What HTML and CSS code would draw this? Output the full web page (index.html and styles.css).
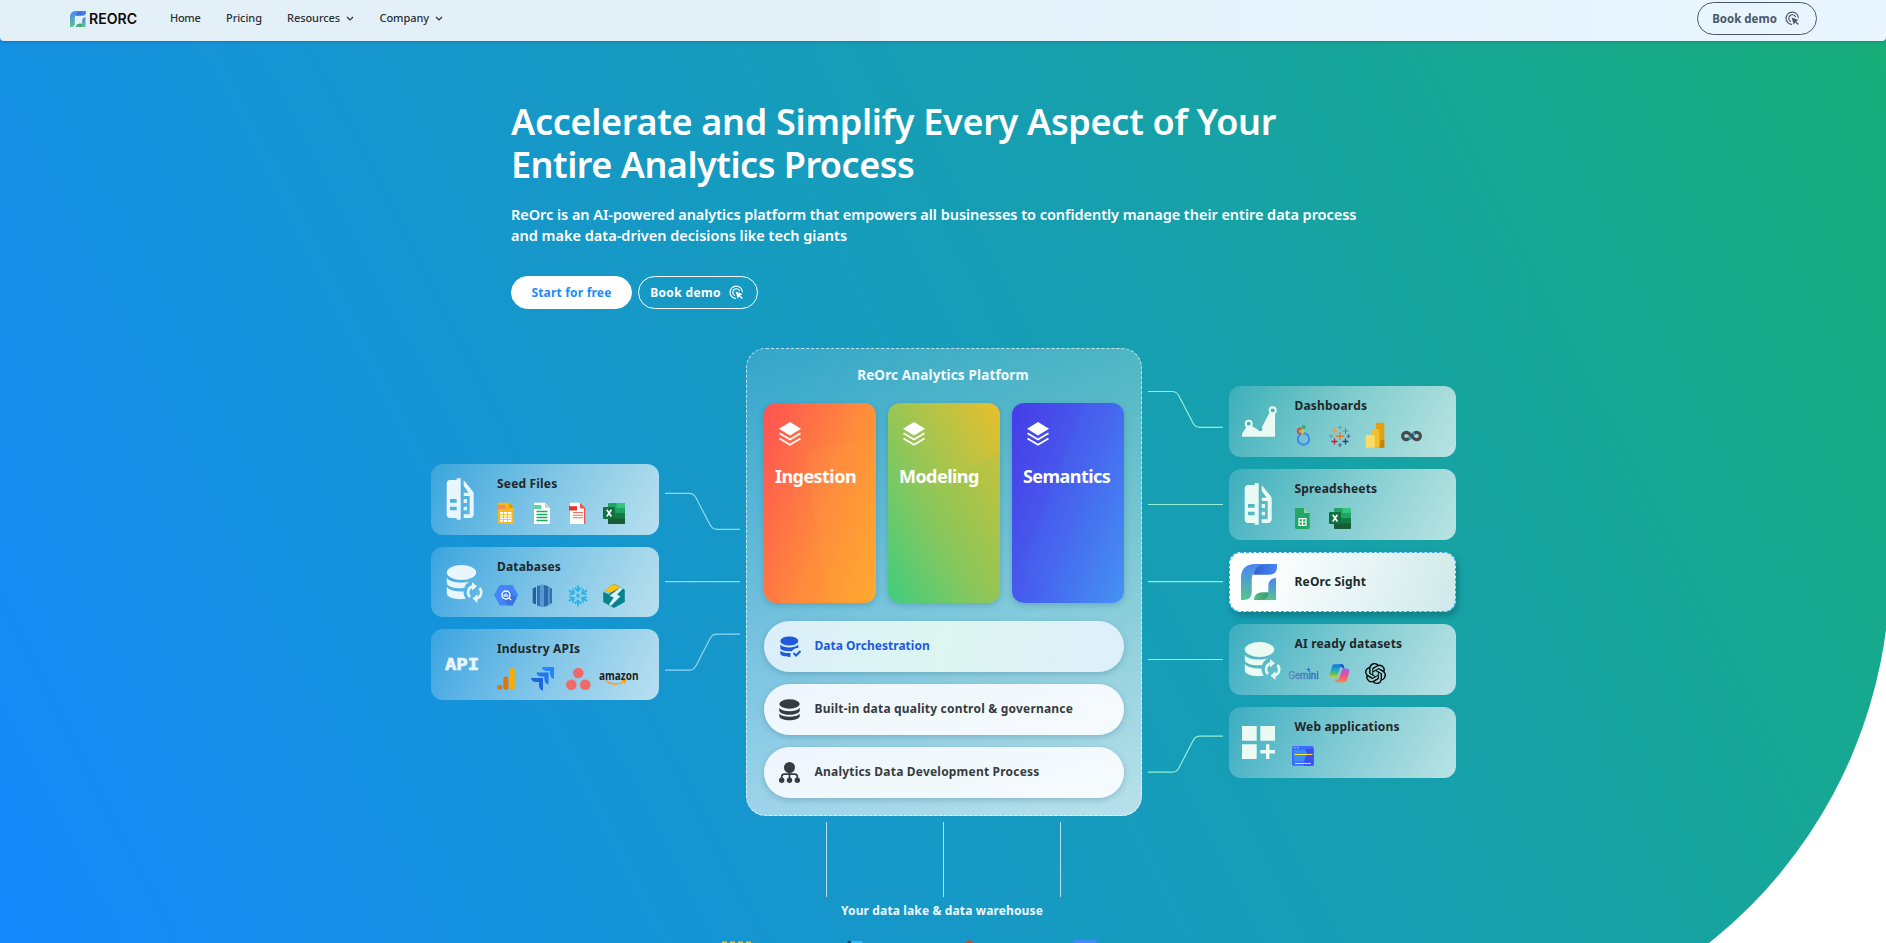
FILE: index.html
```html
<!DOCTYPE html>
<html lang="en">
<head>
<meta charset="utf-8">
<title>ReOrc</title>
<link rel="stylesheet" href="styles.css">
</head>
<body>
<svg class="defs" width="0" height="0" aria-hidden="true">
  <defs>
    <linearGradient id="gLeft" x1="0" y1="0" x2="0" y2="1"><stop offset="0" stop-color="#4a86f7"/><stop offset="1" stop-color="#58c48c"/></linearGradient>
    <linearGradient id="gTop" x1="0" y1="0" x2="1" y2="0"><stop offset="0" stop-color="#2f62cf"/><stop offset="1" stop-color="#4a84f5"/></linearGradient>
    <linearGradient id="gLeaf" x1="0" y1="0" x2="1" y2="0"><stop offset="0" stop-color="#56bf88"/><stop offset="1" stop-color="#3a9a6a"/></linearGradient>
    <linearGradient id="gCop1" x1="0" y1="0" x2="0" y2="1"><stop offset="0" stop-color="#1673dc"/><stop offset=".45" stop-color="#22acc0"/><stop offset=".7" stop-color="#62bf5c"/><stop offset="1" stop-color="#f7cb14"/></linearGradient>
    <linearGradient id="gCop2" x1="0" y1="0" x2="0" y2="1"><stop offset="0" stop-color="#a65be8"/><stop offset=".5" stop-color="#f0508f"/><stop offset="1" stop-color="#ff8a3c"/></linearGradient>
    <linearGradient id="gGem" x1="0" y1="0" x2="1" y2="0"><stop offset="0" stop-color="#6f86b8"/><stop offset=".6" stop-color="#3b6fc4"/><stop offset="1" stop-color="#2c62c8"/></linearGradient>
    <symbol id="mark" viewBox="0 0 36 36">
      <path fill="url(#gLeft)" d="M0 36V14C0 5 5 0 14 0h12C16 2 10.700 8 10.700 17v11c0 5-2.700 8-8 8z"/>
      <path fill="url(#gTop)" d="M12 10.700C14 4 19 0 26 0h10v3c0 5-3 7.700-8 7.700z"/>
      <path fill="url(#gLeft)" d="M35 14v22H20v-7.500h7.300V22c0-5 3-8 7.700-8z"/>
      <path fill="url(#gLeaf)" d="M13 36c0-5 3-7.500 8-7.500h6.300C27 33 25 36 20 36z"/>
    </symbol>
    <symbol id="click" viewBox="0 0 16 16">
      <g fill="none" stroke="currentColor" stroke-width="1.200" stroke-linecap="round"><path d="M7 14.300A6.600 6.600 0 1 1 14.300 7.200"/><path d="M5.800 11.200A3.900 3.900 0 1 1 11.300 6"/></g>
      <path fill="currentColor" d="M7 7l7.500 2.500-2.600 1.500 2.800 2.800-1.100 1.100-2.700-2.800-1.500 2.500z"/>
    </symbol>
    <symbol id="book" viewBox="0 0 57 71">
      <path fill="currentColor" fill-rule="evenodd" d="M19.500 16h6.200v-1.700h4v41.400h-4V54h-6.200a3.800 3.800 0 0 1-3.800-3.800V19.800a3.800 3.800 0 0 1 3.800-3.800zM19 35v3.700h6.700V35zm0 7.700v3.600h6.700v-3.600z"/>
      <path fill="currentColor" d="M32.700 16l10 12.500V50a4 4 0 0 1-4 4h-6v-3.800h6V32h-6v-3.300h5l-5-6.700z"/>
      <path fill="currentColor" d="M32.700 35H36v4h-3.300zM32.700 42.700H36v3.600h-3.300z"/>
    </symbol>
    <symbol id="dbsync" viewBox="0 0 57 71">
      <ellipse fill="currentColor" cx="30.500" cy="25.500" rx="14.700" ry="7.400"/>
      <path fill="currentColor" d="M15.800 30.500c1.500 3.200 7 5 14.700 5 3.500 0 6-.4 8-1-3 1.700-4.700 4-5.300 6.600-10 .6-17.400-1.600-17.400-5.200zM15.800 39.700c1.500 3 7 4.800 16.700 4.800 0 2.700.8 5.200 2.300 7.300C25 53 15.800 51 15.800 46z"/>
      <g fill="none" stroke="currentColor" stroke-width="2.500"><path d="M39 50A6.300 6.300 0 0 1 42 39.300"/><path d="M48.400 41A6.300 6.300 0 0 1 45.400 51.600"/></g>
      <path fill="currentColor" d="M41 35l5 4.300-5 4.300zM46.500 47.300v8.600L41.500 51.600z"/>
    </symbol>
    <symbol id="layers" viewBox="0 0 22 24">
      <path fill="currentColor" d="M11 0l11 6.700L11 13.400 0 6.700z"/>
      <path fill="none" stroke="currentColor" stroke-width="1.900" d="M.5 11.300L11 17.500l10.500-6.200M.5 16.500L11 22.700l10.500-6.200"/>
    </symbol>
    <symbol id="excel" viewBox="0 0 36 28">
      <rect x="12" y="4" width="17" height="21" rx="1.200" fill="#21a366"/>
      <path fill="#107c41" d="M12 14h17v6H12z"/><path fill="#33c481" d="M20.500 4H28a1 1 0 0 1 1 1v4h-8.500z"/><path fill="#185c37" d="M12 19.500h17V24a1 1 0 0 1-1 1H13a1 1 0 0 1-1-1z"/>
      <rect x="7" y="8" width="12" height="12" rx="1.200" fill="#0f7040"/>
      <path stroke="#fff" stroke-width="1.700" d="M10.800 10.800l4.600 6.600M15.400 10.800l-4.600 6.600"/>
    </symbol>
  </defs>
</svg>
<div class="page">
  <header class="nav">
    <div class="brand">
      <svg width="16" height="16"><use href="#mark"/></svg>
      <svg class="wordmark" width="50" height="16"><text x="1" y="13" textLength="48" lengthAdjust="spacingAndGlyphs">REORC</text></svg>
    </div>
    <nav class="menu">
      <a class="item home">Home</a>
      <a class="item pricing">Pricing</a>
      <a class="item resources">Resources<svg width="8" height="6" viewBox="0 0 8 6"><path d="M1 1l3 3 3-3"/></svg></a>
      <a class="item company">Company<svg width="8" height="6" viewBox="0 0 8 6"><path d="M1 1l3 3 3-3"/></svg></a>
    </nav>
    <a class="btn outline dark">Book demo<svg width="15" height="15"><use href="#click"/></svg></a>
  </header>

  <main class="hero">
    <section class="intro">
      <h1>Accelerate and Simplify Every Aspect of Your<br><span class="tight">Entire Analytics Process</span></h1>
      <p>ReOrc is an AI-powered analytics platform that empowers all businesses to confidently manage their entire data process<br><span class="loose">and make data-driven decisions like tech giants</span></p>
      <div class="actions">
        <a class="btn solid">Start for free</a>
        <a class="btn outline">Book demo<svg width="15" height="15"><use href="#click"/></svg></a>
      </div>
    </section>

    <section class="diagram">
      <div class="stack sources">
        <article class="card">
          <svg class="lead" width="57" height="71"><use href="#book"/></svg>
          <div class="body"><h3>Seed Files</h3>
            <div class="tools">
              <svg width="36" height="28"><path fill="#f5b91f" d="M10 3.700h11l5 5V25H10z"/><path fill="#d99a10" d="M21 3.700l5 5h-5z"/><path fill="#f58a4e" d="M9.300 6h8v4h-8z"/><path fill="#fff" d="M12 13h11.500v10H12z"/><path stroke="#f5b91f" d="M12 15.500h11.500M12 18h11.500M12 20.500h11.500M15.500 13v10M19.500 13v10" stroke-width=".8"/></svg>
              <svg width="36" height="28"><path fill="#fff" d="M10 3.700h11l5 5V25H10z"/><path fill="#b9d8cc" d="M21 3.700l5 5h-5z"/><path fill="#5fd39b" d="M9.300 6h8v4h-8z"/><path stroke="#18ab68" stroke-width="1.400" d="M12.500 12.500h11M12.500 15.500h11M12.500 18.500h11M12.500 21.500h11"/></svg>
              <svg width="36" height="28"><path fill="#fff" d="M10 3.700h10l5 5V25H10z"/><path fill="#f0514a" d="M20 3.700l5.300 5V25H24V9.500h-4z"/><path fill="#e5322d" d="M9 7.200h8v4.300H9z"/><path stroke="#ef6a5c" stroke-width="1.100" d="M13 13.500h10M13 16.200h10M13 18.800h10"/></svg>
              <svg width="36" height="28"><use href="#excel"/></svg>
            </div></div>
        </article>
        <article class="card short">
          <svg class="lead" width="57" height="71"><use href="#dbsync"/></svg>
          <div class="body"><h3>Databases</h3>
            <div class="tools">
              <svg width="36" height="28"><path fill="#4386fa" d="M12.500 3h11.500a1 1 0 0 1 1 .5l5 9a1 1 0 0 1 0 1l-5 9.500a1 1 0 0 1-1 .6H12.500a1 1 0 0 1-1-.6L6.300 13.500a1 1 0 0 1 0-1l5.200-9a1 1 0 0 1 1-.5z"/><path fill="#3a73dd" d="M15 17l7-7 6.500 6-4 7.300H20z"/><circle cx="18" cy="13" r="4" fill="none" stroke="#fff" stroke-width="1.400"/><path stroke="#fff" stroke-width="1.200" d="M20.700 15.700l2.500 2.500M16.300 12.500v2M18 11.500v3.500M19.700 13v1.500"/></svg>
              <svg width="36" height="28"><path fill="#255f9e" d="M8.700 6.500L12 5v17.500L8.700 21z"/><path fill="#2e73b8" d="M13 4l5-1.200V25L13 23.500z"/><path fill="#5a97cf" d="M16 2.800h4.500V25H16z"/><path fill="#2b69aa" d="M20 3l4.500 1.200v19.300L20 24.800z"/><path fill="#2e73b8" d="M25.300 5.200L28 6.500v14.700l-2.700 1.200z"/></svg>
              <svg width="36" height="28" fill="none" stroke="#2bb3e6" stroke-width="1.800" stroke-linecap="round"><circle cx="18" cy="13.700" r="1.300" stroke-width="1.300"/><g id="flake"><path d="M18 8.500V3.800M15.200 6.200L18 9l2.800-2.800"/></g><use href="#flake" transform="rotate(60 18 13.700)"/><use href="#flake" transform="rotate(120 18 13.700)"/><use href="#flake" transform="rotate(180 18 13.700)"/><use href="#flake" transform="rotate(240 18 13.700)"/><use href="#flake" transform="rotate(300 18 13.700)"/></svg>
              <svg width="36" height="28"><path fill="#07838f" d="M18 1.700l10.800 6V20L18 26 7.200 20V9.500z"/><path fill="#ffc20e" d="M8.500 8.300L18 2l6.500 3.500L14 11z"/><path fill="#dff1f8" d="M24.500 5.500l2 1.200-5.500 6 3.500 1.600-9.500 9.500-2-1.200 4.700-7-4.200-1.800z"/><path fill="#9fd0e8" d="M7 9.700l1.700-1.300L14 11l-1 1.300z"/></svg>
            </div></div>
        </article>
        <article class="card">
          <svg class="lead" width="57" height="71"><text class="api" x="14" y="41" textLength="34" lengthAdjust="spacingAndGlyphs">API</text></svg>
          <div class="body"><h3>Industry APIs</h3>
            <div class="tools">
              <svg width="36" height="28"><rect x="21.500" y="4" width="5.200" height="21.700" rx="2.600" fill="#f9ab00"/><rect x="15.300" y="12.500" width="5" height="13.200" rx="2.500" fill="#e37400"/><circle cx="11.600" cy="23.200" r="2.500" fill="#e37400"/></svg>
              <svg width="36" height="28"><path fill="#2684ff" d="M18 3h12v12c-2.500-.5-4-2.500-4-5V7h-3c-2.700 0-4.700-1.500-5-4z"/><path fill="#2076f0" d="M12.500 8.500h12v12c-2.500-.5-4-2.500-4-5v-3h-3c-2.700 0-4.700-1.500-5-4z"/><path fill="#1a66dc" d="M7 14h12v12.700c-2.500-.5-4-2.700-4-5.200V18h-3c-2.700 0-4.700-1.500-5-4z"/></svg>
              <svg width="36" height="28" fill="#f06a6a"><circle cx="18.300" cy="9" r="5.300"/><circle cx="11.300" cy="20.700" r="5.300"/><circle cx="25.300" cy="20.700" r="5.300"/></svg>
              <svg class="wide" width="36" height="28"><text class="amazon" x="3" y="15.800" textLength="39.500" lengthAdjust="spacingAndGlyphs">amazon</text><path fill="none" stroke="#ff9900" stroke-width="1.300" d="M9.500 16.500c5 4.500 13.500 5 19 1M26 16.700l3-.2-.3 3"/></svg>
            </div></div>
        </article>
      </div>

      <svg class="links left" width="75" height="468" viewBox="0 0 75 468">
        <path d="M0 145.300h24c4 0 5.500 1.500 7 4.500l14 27c1.500 3 3.500 4.500 7 4.500h23"/><path d="M0 233.700h75"/><path d="M0 322.200h24c4 0 5.500-1.500 7-4.500l14-27c1.500-3 3.500-4.500 7-4.500h23"/>
      </svg>

      <section class="platform">
        <h2>ReOrc Analytics Platform</h2>
        <div class="stages">
          <div class="stage ingestion"><svg width="22" height="24"><use href="#layers"/></svg><strong>Ingestion</strong></div>
          <div class="stage modeling"><svg width="22" height="24"><use href="#layers"/></svg><strong>Modeling</strong></div>
          <div class="stage semantics"><svg width="22" height="24"><use href="#layers"/></svg><strong>Semantics</strong></div>
        </div>
        <div class="pill active">
          <svg width="22" height="22"><g fill="currentColor"><ellipse cx="10.300" cy="5" rx="9" ry="4.500"/><path d="M1.300 8.500c2 2.200 5.500 3 9 3s7-.8 9-3v3.500c-2 0-4.500.5-6.500 3.200-5 .5-11.500-.7-11.500-3.200zM1.300 14.700c2 1.700 6 2.500 10.200 2.300v3.900C6 21 1.300 19.500 1.300 17.500z"/></g><path fill="none" stroke="currentColor" stroke-width="2" d="M14.500 17l2.500 2.500 4.500-4.500"/></svg>
          <span class="snug">Data Orchestration</span></div>
        <div class="pill">
          <svg width="22" height="22" fill="currentColor"><ellipse cx="10.500" cy="5" rx="10.200" ry="4.700"/><path d="M.3 9c2 2.300 6 3.200 10.200 3.200S18.700 11.300 20.700 9v2.700c0 2.300-4.500 4-10.200 4S.3 14 .3 11.700zM.3 14.800c2 2.200 6 3 10.200 3s8.200-.8 10.200-3v2.400c0 2.300-4.500 4-10.200 4s-10.200-1.700-10.200-4z"/></svg>
          <span>Built-in data quality control &amp; governance</span></div>
        <div class="pill">
          <svg width="22" height="22" fill="currentColor"><circle cx="10.500" cy="5.500" r="5.500"/><circle cx="2.700" cy="18.200" r="2.700"/><circle cx="10.500" cy="18.200" r="2.700"/><circle cx="18.300" cy="18.200" r="2.700"/><path fill="none" stroke="currentColor" stroke-width="1.700" d="M10.500 10v8M2.700 17v-2.500a2.500 2.500 0 0 1 2.500-2.300h10.600a2.500 2.500 0 0 1 2.500 2.300V17"/></svg>
          <span>Analytics Data Development Process</span></div>
      </section>

      <svg class="links right" width="75" height="468" viewBox="0 0 75 468">
        <path d="M0 43.500h24c4 0 5.500 1.500 7 4.500l14 27c1.500 3 3.500 4.300 7 4.300h23"/><path d="M0 156.500h75"/><path d="M0 233.700h75"/><path d="M0 311.500h75"/><path d="M0 424.200h24c4 0 5.500-1.500 7-4.500l14-27c1.500-3 3.500-4.500 7-4.500h23"/>
      </svg>

      <div class="stack outputs">
        <article class="card">
          <svg class="lead" width="57" height="71"><path fill="currentColor" d="M13 50.700v-3l5-7.700 4-.5 9 5.500 9-17.500 6-2v25.200z"/><g fill="currentColor"><circle cx="19.700" cy="37.700" r="4"/><circle cx="43.700" cy="24.300" r="4"/></g><g class="hole"><circle cx="19.700" cy="37.700" r="1.900"/><circle cx="43.700" cy="24.300" r="1.900"/><circle cx="31.300" cy="43.200" r="1.900"/></g></svg>
          <div class="body"><h3>Dashboards</h3>
            <div class="tools">
              <svg width="36" height="28" fill="none" stroke-width="2"><circle cx="17.500" cy="18" r="5.700" stroke="#4285f4"/><path stroke="#ea4335" d="M14.500 12.700A2.600 2.600 0 1 1 15.500 7.800"/><path stroke="#fbbc04" d="M16.800 8.500a2.600 2.600 0 0 1-1.300 4"/><circle cx="17.700" cy="6" r="1.300" stroke="#34a853" stroke-width="1.500"/></svg>
              <svg width="36" height="28" stroke-width="1.100"><path stroke="#eb7a2e" stroke-width="1.400" d="M14 15.300h8M18 11.300v8"/><path stroke="#e2a04a" d="M9.500 10h6M12.500 7v6"/><path stroke="#5b879b" d="M20.500 10h6M23.500 7v6"/><path stroke="#c72035" stroke-width="1.300" d="M9.500 20.500h6M12.500 17.500v6"/><path stroke="#1f447e" stroke-width="1.300" d="M20.500 20.500h6M23.500 17.500v6"/><path stroke="#7099a6" d="M16 6.500h4M18 4.500v4M7 15.300h4M9 13.300v4"/><path stroke="#5a5c98" d="M16 24h4M18 22v4M24.500 15.300h4M26.500 13.300v4"/></svg>
              <svg width="36" height="28"><rect x="18" y="1.700" width="8.300" height="25" rx="1" fill="#e3a10d"/><path fill="#c97f0c" d="M23 19h3.300v6.700a1 1 0 0 1-1 1H21z"/><rect x="13" y="8" width="8.500" height="18.700" rx="1" fill="#f0c02e"/><rect x="7.700" y="14" width="9" height="12.700" rx="1" fill="#f8dd66"/></svg>
              <svg width="36" height="28" fill="none" stroke-width="3.200"><path stroke="#474b50" d="M17.500 15c-1.500 1.800-3 3.700-5.200 3.700a3.700 3.700 0 1 1 0-7.400c4.200 0 6.200 7.400 10.400 7.400a3.700 3.700 0 1 0 0-7.400c-2.200 0-3.700 1.700-5.200 3.700"/><path stroke="#29a9cc" d="M14.800 17.600l1.700-1.600M18.800 13.300l1.500-1.300"/></svg>
            </div></div>
        </article>
        <article class="card">
          <svg class="lead" width="57" height="71"><use href="#book"/></svg>
          <div class="body"><h3>Spreadsheets</h3>
            <div class="tools">
              <svg width="36" height="28"><path fill="#23a566" d="M10.300 4H18l5.700 5v14.700a1.300 1.300 0 0 1-1.300 1.300H10.300A1.300 1.300 0 0 1 9 23.700V5.300A1.300 1.300 0 0 1 10.300 4z"/><path fill="#8fd3b1" d="M18 4l5.700 5H18z"/><path fill="none" stroke="#fff" stroke-width="1.200" d="M13 14.700h7v6.600h-7zM13 18h7M16.500 14.700v6.600"/></svg>
              <svg width="36" height="28"><use href="#excel"/></svg>
            </div></div>
        </article>
        <article class="card sight">
          <svg class="lead" width="57" height="60"><use href="#mark" x="12" y="12" width="36" height="36"/></svg>
          <div class="body"><h3>ReOrc Sight</h3></div>
        </article>
        <article class="card">
          <svg class="lead" width="57" height="71"><use href="#dbsync"/></svg>
          <div class="body"><h3>AI ready datasets</h3>
            <div class="tools">
              <svg class="wide" width="36" height="28"><text class="gemini" x="2.500" y="20" textLength="30" lengthAdjust="spacingAndGlyphs">Gemini</text><path fill="#2c62c8" d="M22.500 8l.6 1.900 1.900.6-1.900.6-.6 1.900-.6-1.900-1.900-.6 1.900-.6z"/></svg>
              <svg width="36" height="28"><path fill="url(#gCop2)" d="M22.500 23.300h-7c-1.500 0-2.200-1-2.700-2.500h2c1.500 0 2.200-1 2.700-2.700l2-6c.5-1.700 1.200-2.500 2.700-2.500H25c1.700 0 2.700 1.500 2.200 3.500l-2 7.500c-.5 1.700-1.200 2.700-2.700 2.700z"/><path fill="url(#gCop1)" d="M12.500 5.300h7c1.500 0 2.200 1 2.700 2.500h-2c-1.500 0-2.200 1-2.700 2.700l-2 6c-.5 1.700-1.200 2.500-2.700 2.500H10c-1.700 0-2.700-1.500-2.200-3.500l2-7.500c.5-1.700 1.200-2.700 2.700-2.700z"/><path fill="#1a4fc4" d="M17.500 5.300h2c1.700 0 2.500 1.500 3 4.300-1.500 0-2-.3-2.700-1.800z"/></svg>
              <svg width="36" height="28"><g transform="translate(7 4) scale(.88)"><path fill="#000" d="M22.282 9.821a5.985 5.985 0 0 0-.516-4.910 6.046 6.046 0 0 0-6.510-2.900A6.065 6.065 0 0 0 4.981 4.182a5.985 5.985 0 0 0-3.998 2.900 6.046 6.046 0 0 0 .743 7.097 5.980 5.980 0 0 0 .511 4.911 6.051 6.051 0 0 0 6.515 2.900A5.985 5.985 0 0 0 13.260 24a6.056 6.056 0 0 0 5.772-4.206 5.990 5.990 0 0 0 3.998-2.900 6.056 6.056 0 0 0-.747-7.073zM13.260 22.430a4.476 4.476 0 0 1-2.876-1.040l.141-.081 4.779-2.758a.795.795 0 0 0 .393-.681v-6.737l2.020 1.169a.071.071 0 0 1 .038.052v5.583a4.504 4.504 0 0 1-4.495 4.493zM3.600 18.304a4.470 4.470 0 0 1-.535-3.014l.142.085 4.783 2.759a.771.771 0 0 0 .781 0l5.843-3.369v2.332a.080.080 0 0 1-.033.062L9.740 19.950a4.500 4.500 0 0 1-6.140-1.646zM2.341 7.896a4.485 4.485 0 0 1 2.366-1.973V11.600a.766.766 0 0 0 .388.677l5.815 3.354-2.020 1.169a.076.076 0 0 1-.071 0l-4.830-2.787A4.504 4.504 0 0 1 2.341 7.872zm16.596 3.856L13.104 8.364 15.119 7.200a.076.076 0 0 1 .071 0l4.830 2.791a4.494 4.494 0 0 1-.676 8.105v-5.678a.790.790 0 0 0-.407-.667zm2.011-3.024l-.142-.085-4.774-2.782a.776.776 0 0 0-.785 0L9.409 9.230V6.897a.066.066 0 0 1 .028-.061l4.830-2.787a4.499 4.499 0 0 1 6.681 4.660zM8.307 12.863l-2.020-1.164a.080.080 0 0 1-.038-.057V6.074a4.499 4.499 0 0 1 7.376-3.453l-.142.080L8.704 5.459a.795.795 0 0 0-.393.681zm1.097-2.365l2.602-1.500 2.607 1.500v2.999l-2.597 1.500-2.607-1.500z"/></g></svg>
            </div></div>
        </article>
        <article class="card">
          <svg class="lead" width="57" height="71"><path fill="currentColor" d="M13 19h14.700v14.700H13zM31.300 19H46v14.700H31.300zM13 37.300h14.700V52H13zM37 37.300h3.400v5.600H46v3.500h-5.600V52H37v-5.600h-5.700v-3.500H37z"/></svg>
          <div class="body"><h3>Web applications</h3>
            <div class="tools">
              <svg width="36" height="28"><rect x="6" y="4" width="21.700" height="19.700" rx="1.500" fill="#3f6bff"/><path fill="#3c4fee" d="M20 7h7.700v15.200a1.500 1.500 0 0 1-1.500 1.500H18z"/><path fill="#3a8cf8" d="M8 8h11l2.500 3.500-4 8H8z"/><path stroke="#ffe23a" stroke-width="1.200" d="M8.500 12.500h18M9 21.500h16"/><path stroke="#ffe23a" d="M8 5.700h1.300M11 5.700h1.300"/></svg>
            </div></div>
        </article>
      </div>
    </section>

    <svg class="drops" width="236" height="75"><path d="M1.500 0v75M118.500 0v75M235.500 0v75"/></svg>
    <h4>Your data lake &amp; data warehouse</h4>
    <div class="lakes">
      <svg width="30" height="24"><path fill="#f5c518" d="M0 1.500h5v20H0zM8 1.500h5v20H8zM16 1.500h5v20h-5zM24 1.500h5v20h-5z"/></svg>
      <svg width="24" height="24"><path fill="#12376b" d="M7 1h3L4 20H2z"/><path fill="#35b9f1" d="M10 1h11l5 20H16z"/></svg>
      <svg width="24" height="24"><path fill="#d2432a" d="M12 0l10 6v12l-10 5-10-5V6z"/></svg>
      <svg width="24" height="24"><rect width="24" height="24" rx="3" fill="#4387fa"/></svg>
    </div>
  </main>
</div>
</body>
</html>
```
FILE: styles.css
```css
* { box-sizing: border-box; }
body, h1, h2, h3, h4, p { margin: 0; }
body { background: #fff; font-family: "Noto Sans", "Open Sans", sans-serif; }
.defs { position: absolute; }
.page { width: 100%; height: 943px; overflow: hidden; position: relative; }
svg { display: block; flex: none; }

.nav {
  position: absolute; z-index: 2; top: 0; left: 0; right: 0; height: 41px;
  display: flex; align-items: flex-start; padding: 0 69px 0 70px;
  background: linear-gradient(90deg, #e3f0f8, #e3f0f8 40%, #e9f6ff);
  border-radius: 0 0 4px 4px; box-shadow: 0 1px 3px rgba(0, 40, 80, .25);
}
.brand { display: flex; align-items: center; gap: 2px; height: 37px; width: 100px; }
.wordmark text { font: 600 14px Inter, sans-serif; fill: #0a0a0a; }
.menu { display: flex; height: 35px; flex: 1; }
.item { display: flex; align-items: center; gap: 6px; font-size: 11px; font-weight: 500; letter-spacing: -.07px; color: #2b2f33; white-space: nowrap; }
.item svg { margin-top: 3px; }
.item path { fill: none; stroke: #2b2f33; stroke-width: 1.200; }
.home { width: 56px; letter-spacing: -.3px; }
.pricing { width: 61px; }
.resources { width: 92.500px; }
.btn {
  display: flex; align-items: center; justify-content: center; gap: 8px;
  width: 120px; height: 33px; border-radius: 17px; white-space: nowrap;
  font-size: 12px; font-weight: 700; letter-spacing: .36px; border: 1px solid currentColor;
}
.btn.solid { width: 121px; background: #fff; color: #1a8cff; border-color: #fff; letter-spacing: .2px; }
.btn.outline { color: #fff; padding-right: 2px; }
.btn.outline.dark { color: #4b5768; font-size: 11.500px; letter-spacing: 0; margin-top: 2px; }

.hero {
  width: 1890px; height: 1047px; padding: 100px 4px 0 0;
  background: linear-gradient(63deg, #1487ff 0, #1597cc 37%, #169fb0 62%, #17af78 100%);
  border-bottom-right-radius: 479px;
}
.intro { width: 864px; margin: 0 auto; color: #fff; white-space: nowrap; }
h1 { font-size: 36px; line-height: 43px; font-weight: 600; letter-spacing: -.3px; }
.tight { letter-spacing: -.5px; }
.intro p { margin-top: 18px; font-size: 14.500px; line-height: 21px; font-weight: 600; letter-spacing: -.04px; }
.loose { letter-spacing: 0; }
.actions { display: flex; gap: 6px; margin-top: 30px; }

.diagram {
  display: flex; gap: 6px; align-items: center; width: 1026px; height: 468px;
  margin: 39px auto 0; padding-left: 1px;
}
.stack { display: flex; flex-direction: column; gap: 12px; flex: none; }
.sources { width: 228px; color: #eaf6ff; }
.outputs { width: 227px; color: #eafbf3; }
.card {
  display: flex; height: 71px; border-radius: 12px;
  background: linear-gradient(118deg, rgba(255,255,255,.16), rgba(255,255,255,.46) 50%, rgba(255,255,255,.7));
}
.card.short { height: 70px; }
.body { flex: 1; padding-top: 12px; }
.card h3 { margin-left: 9px; font-size: 12px; line-height: 16px; font-weight: 700; letter-spacing: .18px; color: #22272b; white-space: nowrap; }
.outputs h3 { margin-left: 8.500px; }
.tools { display: flex; height: 28px; margin-top: 7px; }
.wide { overflow: visible; }
.api { font: 700 16.500px "DejaVu Sans Mono", monospace; fill: currentColor; stroke: currentColor; stroke-width: .7; }
.amazon { font: 700 12px "Open Sans", sans-serif; fill: #1d1d1f; }
.gemini { font: 400 10.500px Roboto, sans-serif; fill: url(#gGem); stroke: url(#gGem); stroke-width: .3; }
.hole { fill: #46b0b4; }
.card.sight {
  height: 60px; background: linear-gradient(110deg, #fff, #fbfefe 20%, #cfe9ea);
  outline: 1px dashed #2ea0f5; outline-offset: -1px; box-shadow: 2px 4px 6px rgba(0, 60, 70, .35);
}
.card.sight .body { padding-top: 22px; }
.links { fill: none; stroke-width: 1.200; }
.links.left { stroke: #93d6f5; }
.links.right { stroke: #93efd5; }

.platform {
  width: 396px; height: 468px; flex: none; padding: 17px 17px 0; border-radius: 20px;
  border: 1px dashed rgba(255,255,255,.65);
  background: linear-gradient(163deg, rgba(255,255,255,.13), rgba(255,255,255,.7)) border-box;
}
.platform h2 { margin-right: 2px; text-align: center; font-size: 13.500px; line-height: 18px; font-weight: 700; letter-spacing: .15px; color: #f2fbff; white-space: nowrap; }
.stages { display: flex; gap: 12px; margin-top: 19px; margin-bottom: 18px; }
.stage {
  position: relative; overflow: hidden; width: 112px; height: 200px; border-radius: 12px;
  padding: 19px 0 0 11px; color: #fff;
}
.stage, .pill { box-shadow: 0 2px 6px rgba(0, 60, 90, .22); }
.stage svg { position: relative; margin-left: 4px; }
.stage strong { position: relative; display: block; margin-top: 18px; font-size: 18px; line-height: 24px; letter-spacing: -.55px; white-space: nowrap; }
.stage::before { content: ""; position: absolute; width: 260px; height: 260px; border-radius: 14px; background: linear-gradient(90deg, rgba(255,180,70,.1), rgba(255,180,60,.04)); }
.ingestion { background: linear-gradient(108deg, #ff5252, #ff8a3c 55%, #ffa92c); }
.ingestion::before { left: 39px; top: 48px; transform-origin: 0 0; transform: rotate(-10deg); }
.modeling { background: linear-gradient(to top right, #3fcd7e, #98c655 50%, #e8bf2c); }
.modeling::before { left: 37px; top: 92px; transform-origin: 0 0; transform: rotate(-30deg); background: rgba(135,200,85,.2); }
.semantics { background: linear-gradient(112deg, #463be8, #4660ee 50%, #4592f4); }
.semantics::before { left: 8px; bottom: 25px; transform-origin: 0 100%; transform: rotate(20deg); background: rgba(70,150,245,.07); }
.pill {
  display: flex; align-items: center; gap: 13.500px; height: 51px; padding-left: 15px; border-radius: 26px;
  background: linear-gradient(160deg, #eef5fe, #f2f9fc 50%, #f5fafd);
  color: #363c40; font-size: 12px; font-weight: 700; letter-spacing: .2px; white-space: nowrap;
}
.pill span { padding-bottom: 2px; }
.pill + .pill { margin-top: 12px; }
.snug { letter-spacing: .02px; }
.pill.active { color: #1f5adc; background: linear-gradient(100deg, #dbeefa, #dcf6f0 50%, #def2f2 65%, #ddf0fb); }

.drops { margin: 6px auto 0; stroke: #b5def5; stroke-width: 1; }
.hero h4 { margin: 5px 2px 0 0; text-align: center; font-size: 12px; line-height: 18px; font-weight: 700; letter-spacing: .13px; color: #eef9ff; }
.lakes { display: grid; grid-template-columns: repeat(4, 116px); justify-items: center; width: 464px; margin: 20px 0 0 679px; }
```
